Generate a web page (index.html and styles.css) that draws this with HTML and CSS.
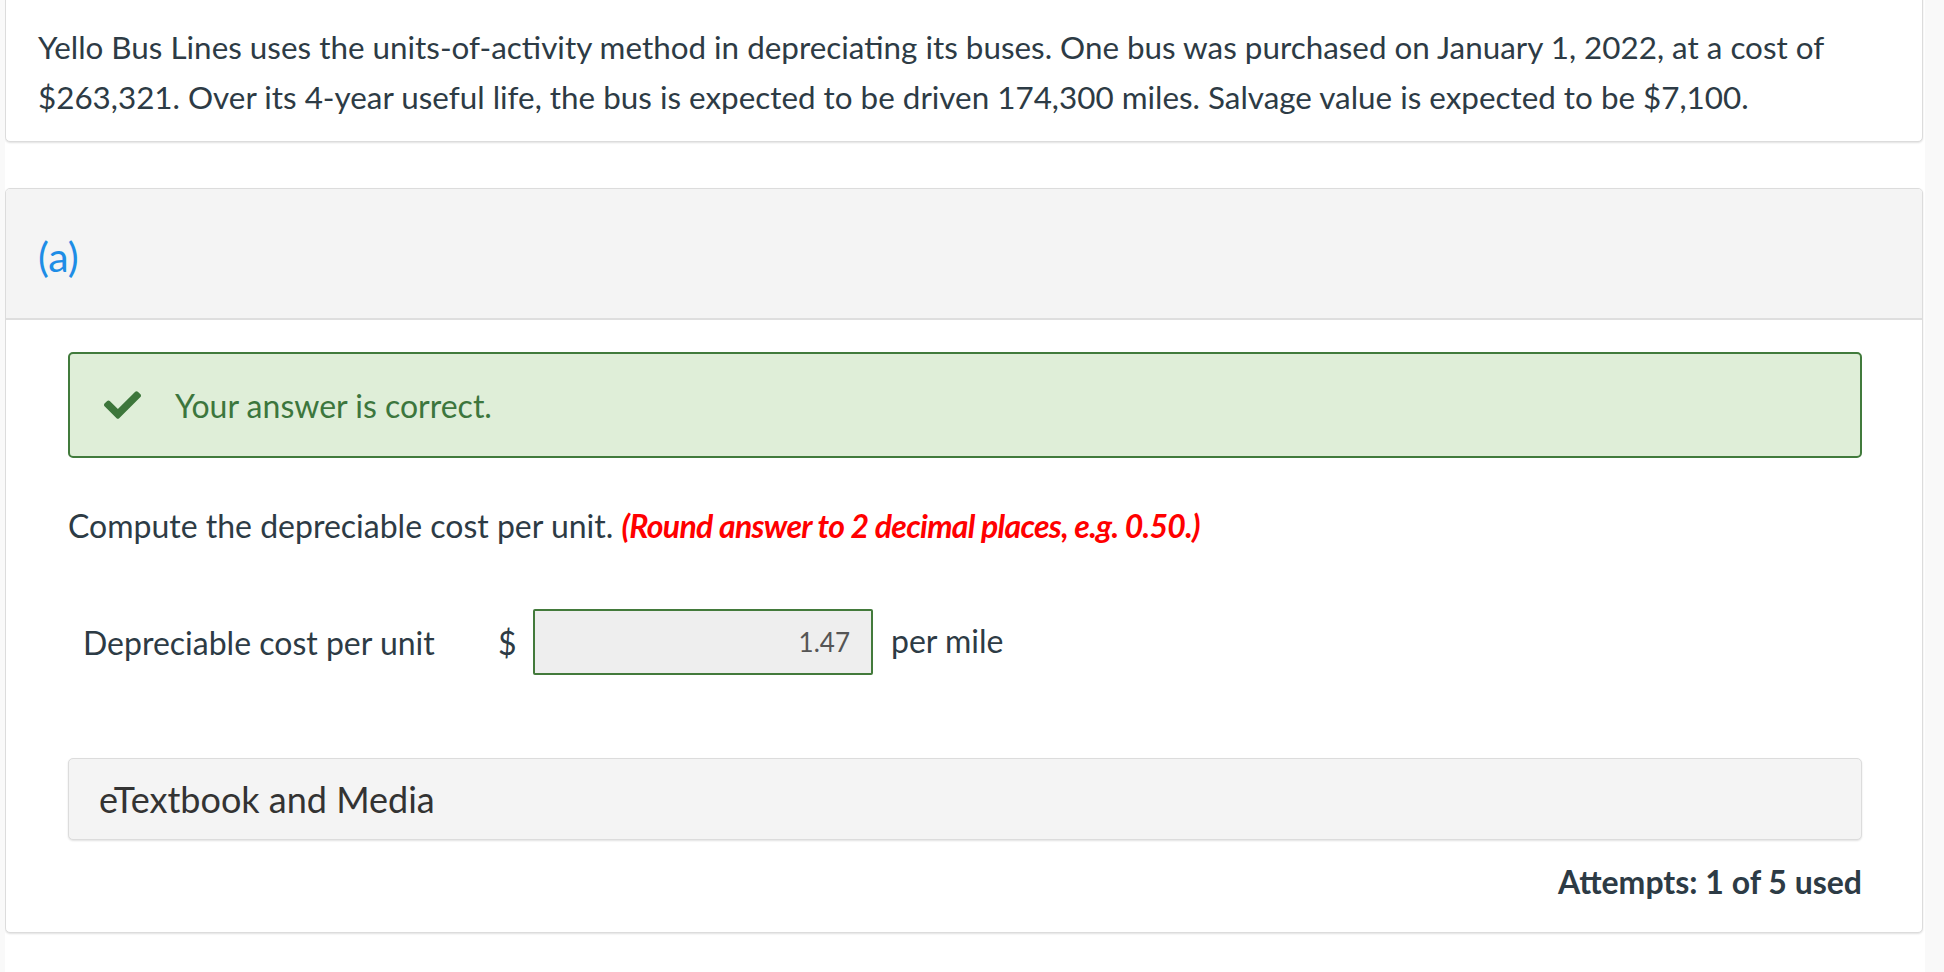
FILE: index.html
```html
<!DOCTYPE html>
<html>
<head>
<meta charset="utf-8">
<link rel="stylesheet" href="styles.css">
</head>
<body>
<div class="page">
  <div class="card intro">
    <p class="intro-text">Yello Bus Lines uses the units-of-activity method in depreciating its buses. One bus was purchased on January 1, 2022, at a cost of $263,321. Over its 4-year useful life, the bus is expected to be driven 174,300 miles. Salvage value is expected to be $7,100.</p>
  </div>

  <div class="card part">
    <div class="part-header"><span class="part-label">(a)</span></div>
    <div class="part-body">
      <div class="alert-success">
        <svg class="check" viewBox="0 64 512 384" width="37" height="28">
          <path fill="#3d763b" d="M173.898 439.404l-166.4-166.4c-9.997-9.997-9.997-26.206 0-36.204l36.203-36.204c9.997-9.998 26.207-9.998 36.204 0L192 312.69 432.095 72.596c9.997-9.997 26.207-9.997 36.204 0l36.203 36.204c9.997 9.997 9.997 26.206 0 36.204l-294.4 294.401c-9.998 9.997-26.207 9.997-36.204-.001z"/>
        </svg>
        <span class="alert-text">Your answer is correct.</span>
      </div>

      <p class="question">Compute the depreciable cost per unit. <em class="hint">(Round answer to 2 decimal places, e.g. 0.50.)</em></p>

      <div class="answer-row">
        <span class="answer-label">Depreciable cost per unit</span>
        <span class="currency">$</span>
        <span class="answer-box">1.47</span>
        <span class="unit">per mile</span>
      </div>

      <div class="media-box">eTextbook and Media</div>

      <div class="attempts">Attempts: 1 of 5 used</div>
    </div>
  </div>
</div>
</body>
</html>
```

FILE: styles.css
```css
* { box-sizing: border-box; }
html, body { margin: 0; padding: 0; }
body {
  background: #f9f9f9;
  font-family: Lato, "Noto Sans", sans-serif;
  color: #2d3b45;
}
.page {
  width: 1920px;
  margin-left: 5px;
  background: #fff;
  height: 972px;
  overflow: hidden;
}
.card {
  background: #fff;
  border: 1px solid #dcdcdc;
  border-radius: 5px;
  box-shadow: 0 1px 2px rgba(0,0,0,0.12);
  width: 1918px;
}
.intro {
  margin-top: -10px;
  padding: 31px 32px 19px;
}
.intro-text {
  margin: 0;
  font-size: 31.4px;
  line-height: 50px;
}
.part {
  margin-top: 46px;
  overflow: hidden;
}
.part-header {
  background: #f4f4f4;
  border-bottom: 2px solid #dedede;
  height: 131px;
  display: flex;
  align-items: center;
  padding-left: 32px;
  padding-top: 6px;
}
.part-label {
  color: #1e8de6;
  font-size: 41px;
}
.part-body {
  padding: 32px 60px 0 62px;
}
.alert-success {
  background: #dfeed8;
  border: 2px solid #417b3c;
  border-radius: 5px;
  height: 106px;
  display: flex;
  align-items: center;
  padding-left: 34px;
}
.check { flex: none; }
.alert-text {
  margin-left: 34px;
  color: #3c763d;
  font-size: 32px;
}
.question {
  margin: 47px 0 0;
  font-size: 32px;
  line-height: 42px;
}
.hint {
  color: #ff0000;
  font-weight: 700;
  font-style: italic;
  letter-spacing: -0.7px;
}
.answer-row {
  display: flex;
  align-items: center;
  margin-top: 62px;
  padding-left: 15px;
  font-size: 32px;
}
.answer-label { width: 415px; }
.currency { width: 35px; color: #2d3b45; }
.answer-box {
  width: 340px;
  height: 66px;
  background: #eeeeee;
  border: 2px solid #437a3b;
  border-radius: 2px;
  display: flex;
  align-items: center;
  justify-content: flex-end;
  padding-right: 21px;
  color: #555;
  font-size: 26px;
}
.unit { margin-left: 18px; margin-top: -4px; }
.media-box {
  margin-top: 83px;
  height: 82px;
  background: #f4f4f4;
  border: 1px solid #dcdcdc;
  border-radius: 5px;
  box-shadow: 0 1px 2px rgba(0,0,0,0.12);
  display: flex;
  align-items: center;
  padding-left: 30px;
  font-size: 36px;
  color: #333;
}
.attempts {
  text-align: right;
  font-weight: 700;
  font-size: 32px;
  margin-top: 22px;
  padding-bottom: 31px;
}
```
